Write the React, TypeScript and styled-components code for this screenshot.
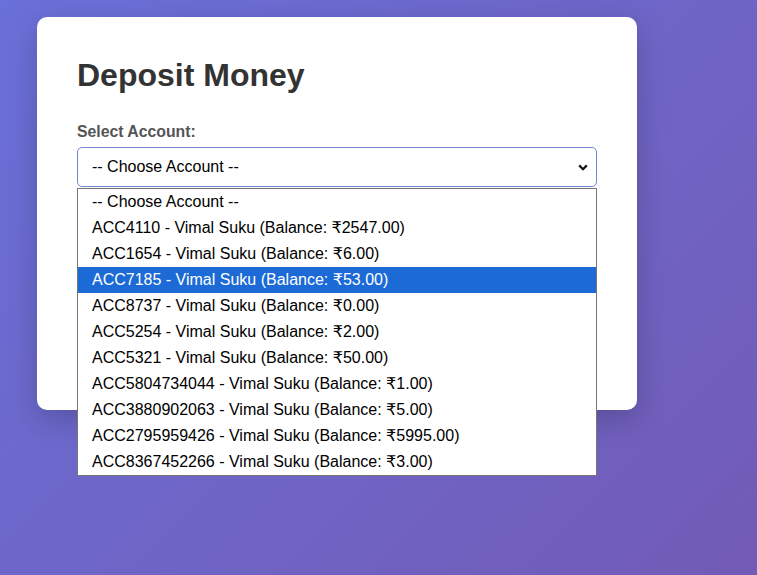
import React from "react";
import styled, { createGlobalStyle } from "styled-components";

const GlobalStyle = createGlobalStyle`
  * { box-sizing: border-box; }
  html, body { margin: 0; padding: 0; }
  body {
    font-family: "Liberation Sans", Arial, "DejaVu Sans", sans-serif;
    background: linear-gradient(135deg, #6a70d9 0%, #725bb6 100%);
    min-height: 100vh;
  }
`;

const Page = styled.div`
  min-height: 100vh;
  padding: 17px 0 0 37px;
`;

const Card = styled.div`
  width: 600px;
  min-height: 393px;
  background: #ffffff;
  border-radius: 10px;
  padding: 40px;
  box-shadow: 0 10px 30px rgba(0, 0, 0, 0.2);
`;

const Title = styled.h1`
  margin: 0 0 29px;
  font-size: 32px;
  font-weight: 700;
  color: #333333;
`;

const Field = styled.div`
  position: relative;
`;

const Label = styled.label`
  display: block;
  font-size: 15.8px;
  font-weight: 700;
  color: #555555;
  margin-bottom: 6px;
`;

const SelectWrap = styled.div`
  position: relative;
`;

const SelectBox = styled.div`
  height: 40px;
  border: 1px solid #7088c8;
  border-radius: 5px;
  display: flex;
  align-items: center;
  justify-content: space-between;
  padding: 0 8px 0 14px;
  font-size: 16px;
  color: #000;
  background: #fff;
`;

const Chevron = styled.svg`
  width: 10px;
  height: 7px;
  margin-top: 1px;
`;

const ListBox = styled.ul`
  position: absolute;
  top: 100%;
  left: 0;
  right: 0;
  margin: 1px 0 0;
  padding: 0;
  list-style: none;
  background: #ffffff;
  border: 1px solid #767676;
  z-index: 10;
`;

const Option = styled.li<{ $active?: boolean }>`
  height: 26px;
  line-height: 26px;
  padding-left: 14px;
  font-size: 16px;
  color: ${(p) => (p.$active ? "#ffffff" : "#000000")};
  background: ${(p) => (p.$active ? "#1b6ad6" : "transparent")};
  white-space: nowrap;
`;

const accounts: [string, string][] = [
  ["ACC4110", "2547.00"],
  ["ACC1654", "6.00"],
  ["ACC7185", "53.00"],
  ["ACC8737", "0.00"],
  ["ACC5254", "2.00"],
  ["ACC5321", "50.00"],
  ["ACC5804734044", "1.00"],
  ["ACC3880902063", "5.00"],
  ["ACC2795959426", "5995.00"],
  ["ACC8367452266", "3.00"],
];

export default function App() {
  return (
    <>
      <GlobalStyle />
      <Page>
        <Card>
          <Title>Deposit Money</Title>
          <Field>
            <Label>Select Account:</Label>
            <SelectWrap>
              <SelectBox>
                <span>-- Choose Account --</span>
                <Chevron viewBox="0 0 10 7">
                  <path d="M1.2 1.4 L5 5.2 L8.8 1.4" fill="none" stroke="#111" strokeWidth="2.2" />
                </Chevron>
              </SelectBox>
              <ListBox>
                <Option>-- Choose Account --</Option>
                {accounts.map(([id, bal]) => (
                  <Option key={id} $active={id === "ACC7185"}>
                    {id} - Vimal Suku (Balance: ₹{bal})
                  </Option>
                ))}
              </ListBox>
            </SelectWrap>
          </Field>
        </Card>
      </Page>
    </>
  );
}
